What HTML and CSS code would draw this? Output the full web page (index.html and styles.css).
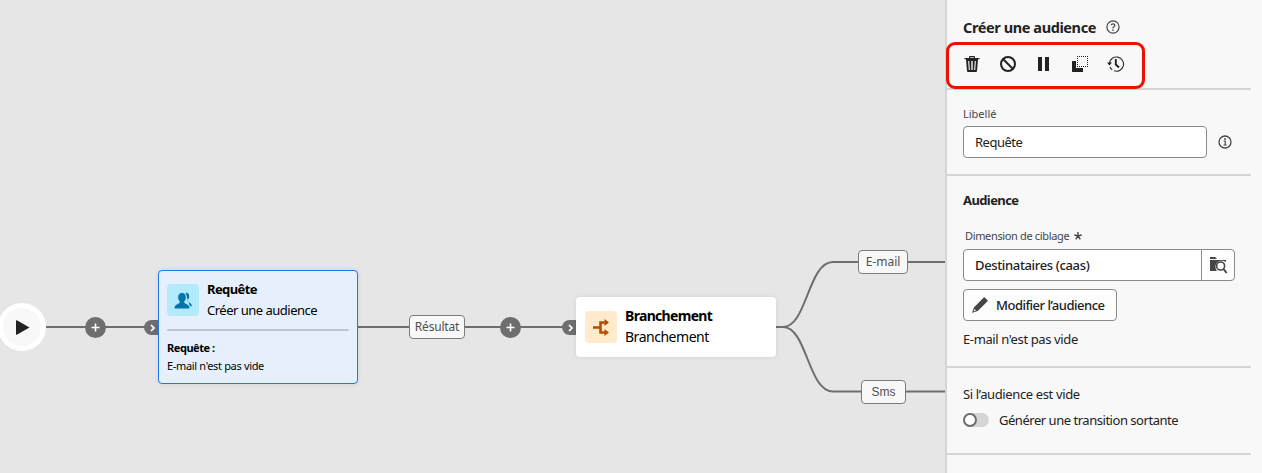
FILE: index.html
```html
<!DOCTYPE html>
<html lang="fr">
<head>
<meta charset="utf-8">
<title>Créer une audience</title>
<link rel="stylesheet" href="styles.css">
</head>
<body>
<div class="app">
  <main class="canvas">
    <svg class="links" width="945" height="473" viewBox="0 0 945 473">
      <path d="M40 327H158M358 327H576M776 327H783C807 327 808 262 833 262H945M783 327C807 327 808 391.500 833 391.500H945"/>
    </svg>
    <div class="start"><svg width="14" height="15" viewBox="0 0 14 15"><path d="M0 .8Q0 0 .8.3L13.500 7.500 .8 14.700Q0 15 0 14.200Z" fill="#222"/></svg></div>
    <div class="plus plus-a"><svg width="9" height="9" viewBox="0 0 9 9"><path d="M4.500 .5V8.500M.5 4.500H8.500" stroke="#fff" stroke-width="1.600"/></svg></div>
    <div class="plus plus-b"><svg width="9" height="9" viewBox="0 0 9 9"><path d="M4.500 .5V8.500M.5 4.500H8.500" stroke="#fff" stroke-width="1.600"/></svg></div>
    <div class="port port-a"><svg width="5" height="8" viewBox="0 0 5 8"><path d="M1 1L4 4 1 7" fill="none" stroke="#fff" stroke-width="1.700"/></svg></div>
    <div class="port port-b"><svg width="5" height="8" viewBox="0 0 5 8"><path d="M1 1L4 4 1 7" fill="none" stroke="#fff" stroke-width="1.700"/></svg></div>

    <section class="node node-query">
      <div class="node-head">
        <div class="tile tile-blue"><svg width="18" height="17" viewBox="0 0 18 17"><path fill="#0074ad" d="M11.500 0.900c2.400-.3 3.900 1.300 3.700 3.700 0 1.500-.7 2.500-1.500 3.500v1.100c0 .7 3.900 1.900 4.100 4.500q0 .6-.6.6h-1.300z"/><path fill="#0074ad" stroke="#b4ebfc" stroke-width="1" d="M8 .5c2.700 0 4.300 2 4.300 4.700 0 2-.8 3.300-1.600 4.300v1c0 .8 4.900 1.500 5.200 5.300q0 1.200-1 1.200H1.100q-1 0-1-1.200C.4 12 5.300 11.300 5.300 10.500v-1C4.500 8.500 3.700 7.200 3.700 5.200 3.700 2.500 5.300.5 8 .5z"/></svg></div>
        <div class="node-text"><b class="t-req">Requête</b><span class="t-create">Créer une audience</span></div>
      </div>
      <div class="node-rule"></div>
      <div class="node-note"><b class="t-note-b">Requête :</b><span class="t-note">E-mail n'est pas vide</span></div>
    </section>

    <section class="node node-fork">
      <div class="tile tile-orange"><svg width="16" height="17" viewBox="0 0 16 17"><path d="M0 8.500H7M12 3.500H7.500V13.500H12" fill="none" stroke="#b84d00" stroke-width="2.600"/><path d="M11.500 0L16 3.500 11.500 7ZM11.500 10L16 13.500 11.500 17Z" fill="#b84d00"/></svg></div>
      <div class="node-text"><b class="t-br-b">Branchement</b><span class="t-br">Branchement</span></div>
    </section>

    <div class="tag tag-result">Résultat</div>
    <div class="tag tag-mail">E-mail</div>
    <div class="tag tag-sms">Sms</div>
  </main>

  <aside class="panel">
    <header class="head">
      <div class="title-row"><h1 class="title">Créer une audience</h1>
        <svg width="14" height="14" viewBox="0 0 14 14"><circle cx="7" cy="7" r="6.100" fill="none" stroke="#464646" stroke-width="1.200"/><path d="M5.200 5.100Q5.600 3.900 7 3.900T8.800 5.300Q8.800 6.100 7.800 6.700T7 8.300" fill="none" stroke="#464646" stroke-width="1.300"/><circle cx="7" cy="10" r=".85" fill="#464646"/></svg>
      </div>
      <div class="toolbar">
        <svg width="16" height="16" viewBox="0 0 16 16"><path fill="#222" fill-rule="evenodd" d="M.5 2H5V1Q5 0 6 0h4q1 0 1 1v1h4.500v1.300H14L13 15q-.1 1-1 1H4q-.9 0-1-1L2 3.300H.5zM6.200 1.200V2h3.600v-.8zM4.100 5l.7 9h1.100l-.7-9zm3.200 0v9h1.400V5zm3.500 0l-.7 9h1.100l.7-9z"/></svg>
        <svg width="16" height="16" viewBox="0 0 16 16"><circle cx="8" cy="8" r="7" fill="none" stroke="#222" stroke-width="2"/><path d="M3 3L13 13" stroke="#222" stroke-width="2"/></svg>
        <svg width="16" height="16" viewBox="0 0 16 16"><path fill="#222" d="M2 1h4v14H2zM9 1h4v14H9z"/></svg>
        <svg width="17" height="16" viewBox="0 0 17 16"><path fill="#222" d="M0 5.500Q0 5 .5 5H4v7h7v3.500q0 .5-.5.5H.5Q0 16 0 15.500z"/><path d="M5 .5H16M5 10.500H16M5.500 2V10M15.500 2V10" fill="none" stroke="#222" stroke-dasharray="1 1"/></svg>
        <svg class="history" width="18" height="16" viewBox="0 0 18 16"><path d="M2.400 7.200A7.100 7.100 0 1 1 7 14.800" fill="none" stroke="#333" stroke-width="1.200"/><path d="M0 6.500H5L2.500 9.500Z" fill="#222"/><path d="M8.800 3V8.500L12 11.500" fill="none" stroke="#222" stroke-width="1.900"/><path d="M3 11A7.100 7.100 0 0 0 5.200 13.800" fill="none" stroke="#333" stroke-width="1.200"/></svg>
      </div>
      <div class="highlight"></div>
    </header>

    <div class="sect sect-label">
      <label class="label t-lib">Libellé</label>
      <div class="row"><div class="field"><span class="t-in">Requête</span></div>
        <svg width="14" height="14" viewBox="0 0 14 14"><circle cx="7" cy="7" r="6" fill="none" stroke="#464646" stroke-width="1.300"/><path d="M5.600 6H7.200V10M5.500 10H8.600" fill="none" stroke="#464646" stroke-width="1.200"/><circle cx="7" cy="4" r=".9" fill="#464646"/></svg>
      </div>
    </div>

    <div class="sect sect-audience">
      <h2 class="t-aud">Audience</h2>
      <label class="label dim"><span class="t-dim">Dimension de ciblage</span><svg width="8" height="8" viewBox="0 0 8 8"><path d="M4 0V4M.3 3L4 4 7.700 3M1.700 7.400L4 4 6.300 7.400" fill="none" stroke="#464646" stroke-width="1.400"/></svg></label>
      <div class="combo"><div class="field"><span class="t-dest">Destinataires (caas)</span></div>
        <button class="pick" aria-label="Parcourir"><svg width="18" height="17" viewBox="0 0 18 17"><path fill="#464646" d="M0 0H5L7 2H0z"/><path fill="#464646" d="M0 3H16V5Q11 2.500 7.500 5 3.500 9 7 14H0z"/><circle cx="10.600" cy="9" r="4" fill="none" stroke="#464646" stroke-width="1.600"/><path d="M13.500 12L16.700 16" stroke="#464646" stroke-width="2"/></svg></button>
      </div>
      <button class="edit"><svg width="16" height="16" viewBox="0 0 16 16"><path fill="#464646" d="M11.500.7q.7-.8 1.500 0L15.300 3q.8.8 0 1.500L6.300 13.500 5.600 14.100.5 15.700Q0 15.800.2 15.300L1.900 10.400zM2.500 11.900L1.500 14.500 4 13.600z"/></svg><span class="t-mod">Modifier l’audience</span></button>
      <div class="rule"><span class="t-rule">E-mail n'est pas vide</span></div>
    </div>

    <div class="sect sect-empty">
      <div class="t-si">Si l’audience est vide</div>
      <div class="switch-row"><span class="switch"></span><span class="t-gen">Générer une transition sortante</span></div>
    </div>
  </aside>
</div>
</body>
</html>
```
FILE: styles.css
```css
*, *::before { box-sizing: border-box; }
body { margin: 0; font-family: "Noto Sans", sans-serif; font-size: 13px; color: #222; overflow: hidden; }
svg { display: block; flex: none; }
h1, h2 { margin: 0; }
button { font: inherit; color: inherit; margin: 0; }
span, b, h1, h2, label { white-space: nowrap; }
.app { display: flex; width: 1262px; height: 473px; }

.canvas { position: relative; width: 945px; background: #e6e6e6; overflow: hidden; }
.links { position: absolute; left: 0; top: 0; }
.links path { fill: none; stroke: #6e6e6e; stroke-width: 2; }
.start { position: absolute; left: -2px; top: 303px; width: 48px; height: 48px; border: 5px solid #fff; border-radius: 50%; background: #f8f8f8; display: flex; align-items: center; padding-left: 13px; }
.plus { position: absolute; top: 317px; width: 21px; height: 21px; border-radius: 50%; background: #6e6e6e; display: grid; place-items: center; }
.plus-a { left: 85px; }
.plus-b { left: 500px; }
.port { position: absolute; top: 320px; width: 15px; height: 15px; border-radius: 8px 0 0 8px; background: #6e6e6e; display: flex; align-items: center; justify-content: flex-end; padding-right: 4px; }
.port-a { left: 144px; }
.port-b { left: 562px; }

.node { position: absolute; border-radius: 4px; color: #000; }
.node-query { left: 158px; top: 270px; width: 200px; height: 114px; background: #e6f0fd; border: 1px solid #1b78ee; padding: 8px 8px; box-shadow: 0 0 4px rgba(0,0,0,.1); }
.node-fork { left: 576px; top: 297px; width: 200px; height: 60px; background: #fff; padding: 8px 9px; display: flex; align-items: center; gap: 8px; box-shadow: 0 0 4px rgba(0,0,0,.1); }
.node-fork .node-text { margin-top: -2px; }
.node-head { display: flex; gap: 8px; height: 42px; align-items: center; }
.node-text { display: flex; flex-direction: column; line-height: 21px; }
.tile { width: 32px; height: 32px; border-radius: 4px; display: grid; place-items: center; flex: none; }
.tile-blue { background: #b4ebfc; }
.tile-orange { background: #ffebcc; }
.node-rule { height: 2px; background: #bdc6d2; margin-top: 8px; border-radius: 1px; }
.node-note { display: flex; flex-direction: column; line-height: 18px; font-size: 11px; margin-top: 8px; }
.t-req { letter-spacing: -.6px; }
.t-create { letter-spacing: -.5px; }
.t-note-b { letter-spacing: -.45px; }
.t-note { letter-spacing: -.33px; }
.t-br-b { font-size: 14px; letter-spacing: -.68px; }
.t-br { font-size: 14px; letter-spacing: -.48px; }
.tag { position: absolute; height: 24px; border: 1px solid #7c7c7c; border-radius: 4px; background: #f8f8f8; color: #505050; font-size: 12px; line-height: 22px; text-align: center; }
.tag-result { left: 409px; top: 315px; width: 56px; letter-spacing: -.2px; }
.tag-mail { left: 858px; top: 250px; width: 50px; }
.tag-sms { left: 861px; top: 380px; width: 45px; font-family: "Liberation Sans", sans-serif; }

.panel { width: 317px; border-left: 2px solid #d5d5d5; background: #f8f8f8; }
.head, .sect { width: 304px; padding-left: 16px; border-bottom: 2px solid #d5d5d5; }
.head { height: 90px; padding-top: 17px; position: relative; }
.title-row { display: flex; align-items: center; gap: 10px; height: 20px; }
.title { font-size: 14.5px; line-height: 20px; width: 133px; letter-spacing: -.4px; }
.toolbar { display: flex; gap: 20px; margin-top: 19px; padding-left: 1px; }
.history { margin-left: -2px; }
.highlight { position: absolute; left: -1px; top: 42px; width: 199px; height: 47px; border: 3px solid #ee1000; border-radius: 9px; }
.sect-label { height: 86px; padding-top: 16px; }
.label { display: block; font-size: 11px; line-height: 16px; color: #464646; }
.row { display: flex; align-items: center; gap: 11px; margin-top: 4px; }
.field { width: 244px; height: 32px; border: 1px solid #8a8a8a; border-radius: 4px; background: #fff; padding: 0 11px; display: flex; align-items: center; }
.t-in { letter-spacing: -.5px; }
.sect-audience { height: 192px; padding-top: 14px; }
.sect-audience h2 { font-size: 13px; line-height: 20px; letter-spacing: -.6px; }
.dim { display: flex; align-items: center; gap: 5px; padding-left: 2px; margin-top: 18px; }
.t-dim { letter-spacing: -.35px; }
.combo { display: flex; margin-top: 5px; }
.combo .field { width: 239px; border-radius: 4px 0 0 4px; }
.t-dest { font-weight: 500; letter-spacing: -.35px; }
.pick { width: 34px; height: 32px; margin-left: -1px; padding: 0 0 0 8px; border: 1px solid #8a8a8a; border-radius: 0 4px 4px 0; background: #fdfdfd; }
.edit { margin-top: 8px; width: 154px; height: 32px; border: 1px solid #8a8a8a; border-radius: 4px; background: #fdfdfd; display: flex; align-items: center; gap: 8px; padding: 0 0 0 8px; }
.t-mod { font-weight: 500; letter-spacing: -.5px; }
.rule { margin-top: 8px; line-height: 20px; letter-spacing: -.38px; }
.sect-empty { height: 87px; padding-top: 16px; line-height: 20px; }
.t-si { letter-spacing: -.37px; }
.t-gen { letter-spacing: -.47px; }
.switch-row { display: flex; align-items: center; gap: 10px; margin-top: 6px; }
.switch { width: 26px; height: 14px; border-radius: 7px; background: #d5d5d5; flex: none; }
.switch::before { content: ""; display: block; width: 14px; height: 14px; border: 2px solid #6e6e6e; border-radius: 50%; background: #fff; }
```
